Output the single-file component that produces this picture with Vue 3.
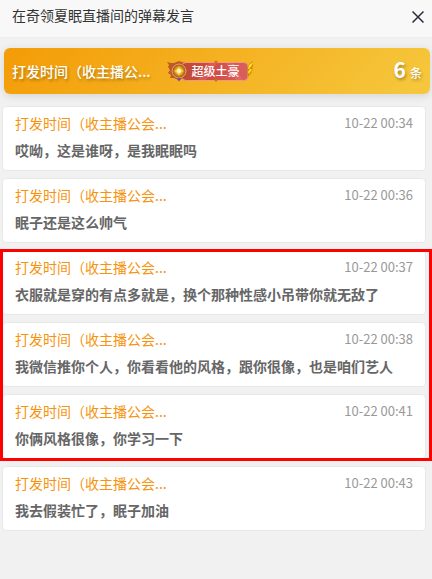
<script setup>
import { ref } from 'vue';

const title = ref('在奇领夏眠直播间的弹幕发言');
const userName = ref('打发时间（收主播公会...');

const groups = ref([
  {
    marked: false,
    items: [
      { time: '10-22 00:34', text: '哎呦，这是谁呀，是我眠眠吗' },
      { time: '10-22 00:36', text: '眠子还是这么帅气' }
    ]
  },
  {
    marked: true,
    items: [
      { time: '10-22 00:37', text: '衣服就是穿的有点多就是，换个那种性感小吊带你就无敌了' },
      { time: '10-22 00:38', text: '我微信推你个人，你看看他的风格，跟你很像，也是咱们艺人' },
      { time: '10-22 00:41', text: '你俩风格很像，你学习一下' }
    ]
  },
  {
    marked: false,
    items: [
      { time: '10-22 00:43', text: '我去假装忙了，眠子加油' }
    ]
  }
]);
</script>

<template>
  <div class="panel">
    <header class="header">
      <h1 class="title">{{ title }}</h1>
      <button class="close" type="button" aria-label="关闭">
        <svg width="12" height="12" viewBox="0 0 12 12">
          <path d="M0.5 0.5L11.5 11.5M11.5 0.5L0.5 11.5" fill="none" stroke="#2b2b3a" stroke-width="1.5" />
        </svg>
      </button>
    </header>

    <section class="banner">
      <span class="banner-name">打发时间（收主播公...</span>
      <span class="badge">
        <svg class="badge-art" width="88" height="22" viewBox="0 0 88 22">
          <defs>
            <linearGradient id="plate" x1="0" x2="1" y1="0" y2="0">
              <stop offset="0" stop-color="#bd4a34" />
              <stop offset="0.4" stop-color="#cf4a44" />
              <stop offset="1" stop-color="#d9605f" />
            </linearGradient>
            <radialGradient id="medal">
              <stop offset="0" stop-color="#fffbc0" />
              <stop offset="0.35" stop-color="#ffc62e" />
              <stop offset="0.7" stop-color="#c77818" />
              <stop offset="1" stop-color="#9c4a20" />
            </radialGradient>
          </defs>
          <path d="M3 5L1 2L5 3L8 3L13 1L19 3L17 18L13 20L8 18L4 18L5 15L2 13L4 10L2 7Z" fill="#c05a2c" />
          <rect x="16" y="2.5" width="66" height="18" rx="4" fill="url(#plate)" stroke="#f09a78" />
          <path d="M32 20L43 3H51L40 20ZM60 3L70 20H77L67 3Z" fill="#f08080" opacity="0.3" />
          <circle cx="13" cy="11" r="8" fill="#b0492c" />
          <circle cx="13" cy="11" r="7" fill="url(#medal)" stroke="#e8b06a" />
          <path d="M13 6L14.5 9.5L18 11L14.5 12.5L13 16L11.5 12.5L8 11L11.5 9.5Z" fill="#ffce43" />
          <circle cx="13" cy="11" r="2" fill="#fffbd0" />
          <path d="M11 19L13 17.5L15 19L13 21.5Z" fill="#7948a0" />
          <path d="M48 2L50 0.5L52 2L50 4ZM48 20L50 18.5L52 20L50 22Z" fill="#d66b20" />
          <path d="M82 17L81 9L83 4L87 1V6L86 8L87 9L85 12L86 12L82 17Z" fill="#d38a00" />
          <path d="M82 9L83 5L87 2L86 5L83 9ZM82 12L84 9L86 9L83 14Z" fill="#ffe32a" />
        </svg>
        <span class="badge-text">超级土豪</span>
      </span>
      <span class="count"><b class="count-number">6</b>条</span>
    </section>

    <main class="list">
      <div
        v-for="(group, index) in groups"
        :key="index"
        class="group"
        :class="{ marked: group.marked }"
      >
        <article v-for="item in group.items" :key="item.time" class="card">
          <div class="card-top">
            <a class="name" href="#">{{ userName }}</a>
            <time class="time">{{ item.time }}</time>
          </div>
          <p class="text">{{ item.text }}</p>
        </article>
      </div>
    </main>
  </div>
</template>

<style>
body {
  margin: 0;
  background: #f1f1f1;
}
</style>

<style scoped>
.panel {
  min-height: 100vh;
  background: #f1f1f1;
  font-family: "Noto Sans CJK SC", sans-serif;
  font-size: 14px;
}

.header {
  display: flex;
  align-items: center;
  justify-content: space-between;
  box-sizing: border-box;
  height: 38px;
  padding: 0 8px 4px 12px;
  background: #f8f8f8;
  border-bottom: 1px solid #eee;
}

.title {
  margin: 0;
  padding-bottom: 4px;
  color: #333;
  font-size: 14px;
  font-weight: 400;
  line-height: 20px;
}

.close {
  display: flex;
  padding: 0;
  border: 0;
  background: none;
  cursor: pointer;
}

.banner {
  display: flex;
  align-items: center;
  box-sizing: border-box;
  height: 46px;
  margin: 10px 2px 12px 4px;
  padding: 0 8px;
  border-radius: 6px;
  background: linear-gradient(135deg, #f39c06, #f6c83e);
  box-shadow: 0 2px 8px rgba(0, 0, 0, 0.12);
  color: #fff;
  text-shadow: 1px 2px 3px rgba(0, 0, 0, 0.3);
}

.banner-name {
  font-weight: 500;
  line-height: 20px;
}

.badge {
  display: grid;
  align-items: center;
  margin-left: 15px;
}

.badge-art,
.badge-text {
  grid-area: 1 / 1;
}

.badge-text {
  padding-left: 26px;
  font-size: 12px;
  font-weight: 500;
  line-height: 20px;
  text-shadow: none;
}

.count {
  margin-left: auto;
  font-size: 12px;
  font-weight: 500;
  line-height: 24px;
}

.count-number {
  margin-right: 4px;
  font-size: 21px;
  font-weight: 700;
}

.list,
.group {
  display: flex;
  flex-direction: column;
  gap: 7px;
}

.list {
  padding: 0 6px 0 2px;
}

.group {
  position: relative;
}

/* red frame over the highlighted messages */
.marked::after {
  content: "";
  position: absolute;
  top: -1px;
  right: -6px;
  bottom: -2px;
  left: -2px;
  border: 3px solid #f00;
  pointer-events: none;
}

.card {
  box-sizing: border-box;
  height: 65px;
  padding: 6px 12px;
  border: 1px solid #e8e8e8;
  border-radius: 4px;
  background: #fff;
}

.card-top {
  display: flex;
  justify-content: space-between;
}

.name {
  color: #f7930c;
  line-height: 20px;
  text-decoration: none;
}

.time {
  color: #999;
  font-size: 13px;
  line-height: 20px;
}

.text {
  margin: 7px 0 0;
  color: #666;
  font-weight: 700;
  line-height: 20px;
}
</style>
